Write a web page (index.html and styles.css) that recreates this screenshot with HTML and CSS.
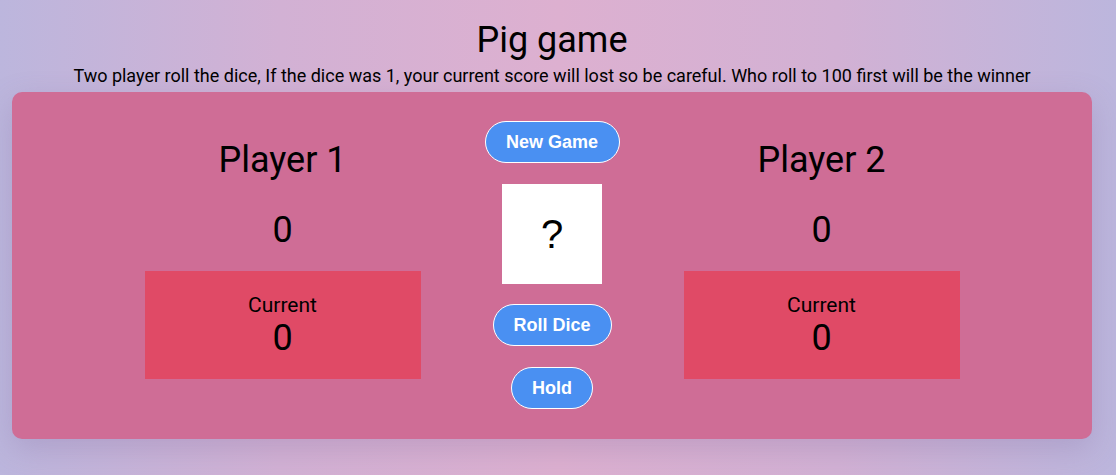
FILE: index.html
```html
<!DOCTYPE html>
<html lang="en">
<head>
<meta charset="utf-8">
<title>Pig game</title>
<link rel="stylesheet" href="styles.css">
</head>
<body>
<header class="head">
  <h1 class="title">Pig game</h1>
  <p class="rules">Two player roll the dice, If the dice was 1, your current score will lost so be careful. Who roll to 100 first will be the winner</p>
</header>
<main class="board">
  <section class="player">
    <h2 class="player-name">Player 1</h2>
    <div class="score">0</div>
    <div class="current">
      <div class="current-label">Current</div>
      <div class="current-score">0</div>
    </div>
  </section>
  <section class="controls">
    <button class="btn btn-new">New Game</button>
    <div class="dice">?</div>
    <button class="btn btn-roll">Roll Dice</button>
    <button class="btn btn-hold">Hold</button>
  </section>
  <section class="player">
    <h2 class="player-name">Player 2</h2>
    <div class="score">0</div>
    <div class="current">
      <div class="current-label">Current</div>
      <div class="current-score">0</div>
    </div>
  </section>
</main>
</body>
</html>
```

FILE: styles.css
```css
* { box-sizing: border-box; }
html, body { height: 100%; }
body {
  margin: 0;
  padding-right: 12px;
  font-family: Roboto, "Liberation Sans", sans-serif;
  color: #000;
  background: linear-gradient(to right, #bcb6dd 0%, #d2b1d4 25%, #ddb0d0 50%, #d2b1d4 75%, #bcb6dd 100%);
  display: flex;
  flex-direction: column;
  align-items: center;
}
.head {
  text-align: center;
  padding-top: 20px;
}
.title {
  margin: 0;
  font-size: 36px;
  font-weight: 400;
  line-height: 40px;
}
.rules {
  margin: 0;
  font-size: 18px;
  line-height: 32px;
  height: 32px;
  white-space: nowrap;
}
.board {
  width: 1080px;
  height: 347px;
  background: #cf6d96;
  border-radius: 10px;
  box-shadow: 0 10px 30px rgba(120, 100, 150, 0.25);
  display: flex;
  justify-content: center;
  gap: 64px;
}
.player {
  width: 276px;
  display: flex;
  flex-direction: column;
  align-items: center;
  padding-top: 46px;
}
.player-name {
  margin: 0;
  font-size: 36px;
  font-weight: 400;
  line-height: 44px;
}
.score {
  font-size: 36px;
  line-height: 44px;
  margin-top: 26px;
}
.current {
  width: 276px;
  height: 108px;
  margin-top: 19px;
  background: #e04a66;
  text-align: center;
  padding-top: 22px;
}
.current-label {
  font-size: 21px;
  line-height: 24px;
}
.current-score {
  font-size: 36px;
  line-height: 42px;
}
.controls {
  width: 135px;
  display: flex;
  flex-direction: column;
  align-items: center;
  padding-top: 29px;
}
.btn {
  font-family: "Liberation Sans", Arial, sans-serif;
  font-weight: 700;
  font-size: 18px;
  color: #fff;
  background: #4a90f2;
  border: 1px solid #fff;
  border-radius: 21px;
  height: 42px;
  padding: 0;
  cursor: pointer;
}
.btn-new { width: 135px; }
.btn-roll { width: 119px; margin-top: 20px; }
.btn-hold { width: 82px; margin-top: 21px; }
.dice {
  width: 100px;
  height: 100px;
  margin-top: 21px;
  background: #fff;
  font-family: "Liberation Sans", Arial, sans-serif;
  font-size: 40px;
  display: flex;
  align-items: center;
  justify-content: center;
}
```
